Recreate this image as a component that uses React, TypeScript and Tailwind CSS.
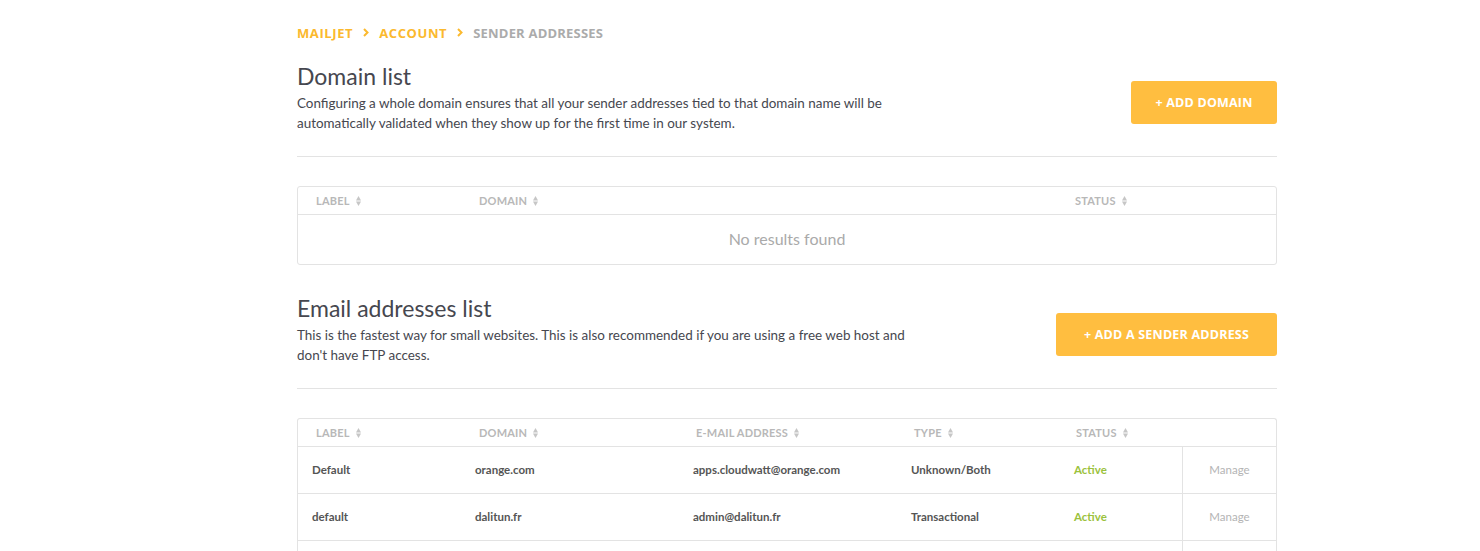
const BODY = "font-['Lato','Noto_Sans',sans-serif]";
const HEAD = "font-['Open_Sans','Noto_Sans',sans-serif]";

function SortIcon() {
  return (
    <svg width="5" height="10" viewBox="0 0 5 10" className="ml-[6px] inline-block">
      <path d="M2.5 0 L5 4.6 H0 Z" fill="#c6c6c6" />
      <path d="M2.5 10 L5 5.4 H0 Z" fill="#c6c6c6" />
    </svg>
  );
}

function Chevron() {
  return (
    <svg width="6" height="9" viewBox="0 0 6 9" className="mx-[10px] mb-[3px]">
      <path d="M1 1 L4.5 4.5 L1 8" fill="none" stroke="#fbb92e" strokeWidth="2" />
    </svg>
  );
}

function Th({ label, className = "" }: { label: string; className?: string }) {
  return (
    <div className={`flex items-center pt-[2px] text-[11px] font-bold uppercase tracking-[0.2px] text-[#b8b8b8] ${className}`}>
      {label}
      <SortIcon />
    </div>
  );
}

function SectionHeader({
  title,
  text,
  button,
  buttonWidth,
}: {
  title: string;
  text: string;
  button: string;
  buttonWidth: string;
}) {
  return (
    <div className="flex items-start justify-between border-b border-[#e3e3e3] pb-[23px]">
      <div className="w-[615px]">
        <h2 className="text-[23px] leading-[28px] text-[#46474f]">{title}</h2>
        <p className="mt-[3px] text-[13.45px] leading-[20px] text-[#46474f]">{text}</p>
      </div>
      <button
        className={`${HEAD} mt-[19px] h-[43px] ${buttonWidth} rounded-[3px] bg-[#ffbe40] pt-[2px] text-[12.5px] font-bold uppercase tracking-[0.2px] text-white`}
      >
        + {button}
      </button>
    </div>
  );
}

const senders = [
  { label: "Default", domain: "orange.com", email: "apps.cloudwatt@orange.com", type: "Unknown/Both" },
  { label: "default", domain: "dalitun.fr", email: "admin@dalitun.fr", type: "Transactional" },
  { label: "", domain: "", email: "", type: "" },
];

export default function App() {
  return (
    <div className={`${BODY} min-h-[551px] bg-white`}>
      <div className="ml-[297px] w-[980px] pt-[24px]">
        <nav className={`${HEAD} flex items-center text-[13px] font-bold uppercase tracking-[0.6px]`}>
          <span className="text-[#fbb92e]">Mailjet</span>
          <Chevron />
          <span className="text-[#fbb92e]">Account</span>
          <Chevron />
          <span className="tracking-[0.2px] text-[#ababab]">Sender addresses</span>
        </nav>

        <div className="mt-[18px]">
          <SectionHeader
            title="Domain list"
            text="Configuring a whole domain ensures that all your sender addresses tied to that domain name will be automatically validated when they show up for the first time in our system."
            button="Add domain"
            buttonWidth="w-[146px]"
          />
        </div>

        <div className="mt-[29px] rounded-[3px] border border-[#e3e3e3]">
          <div className="flex h-[28px] items-center border-b border-[#e3e3e3]">
            <Th label="Label" className="w-[181px] pl-[18px]" />
            <Th label="Domain" className="w-[596px]" />
            <Th label="Status" />
          </div>
          <div className="flex h-[49px] items-center justify-center text-[16px] text-[#aaaaaa]">
            No results found
          </div>
        </div>

        <div className="mt-[29px]">
          <SectionHeader
            title="Email addresses list"
            text="This is the fastest way for small websites. This is also recommended if you are using a free web host and don't have FTP access."
            button="Add a sender address"
            buttonWidth="w-[221px]"
          />
        </div>

        <div className="mt-[29px] rounded-t-[3px] border border-b-0 border-[#e3e3e3]">
          <div className="flex h-[28px] items-center border-b border-[#e3e3e3]">
            <Th label="Label" className="w-[181px] pl-[18px]" />
            <Th label="Domain" className="w-[217px]" />
            <Th label="E-mail address" className="w-[218px]" />
            <Th label="Type" className="w-[162px]" />
            <Th label="Status" />
          </div>
          {senders.map((s, i) => (
            <div key={i} className="flex h-[47px] items-center border-b border-[#e3e3e3] text-[11.5px] font-bold text-[#555]">
              <div className="w-[177px] pl-[14px]">{s.label}</div>
              <div className="w-[218px]">{s.domain}</div>
              <div className="w-[218px]">{s.email}</div>
              <div className="w-[163px]">{s.type}</div>
              <div className="w-[108px] text-[#9bc23c]">{s.label ? "Active" : ""}</div>
              <div className="flex h-full flex-1 items-center justify-center border-l border-[#e3e3e3] font-normal text-[#b4b4b4]">
                {s.label ? "Manage" : ""}
              </div>
            </div>
          ))}
        </div>
      </div>
    </div>
  );
}
